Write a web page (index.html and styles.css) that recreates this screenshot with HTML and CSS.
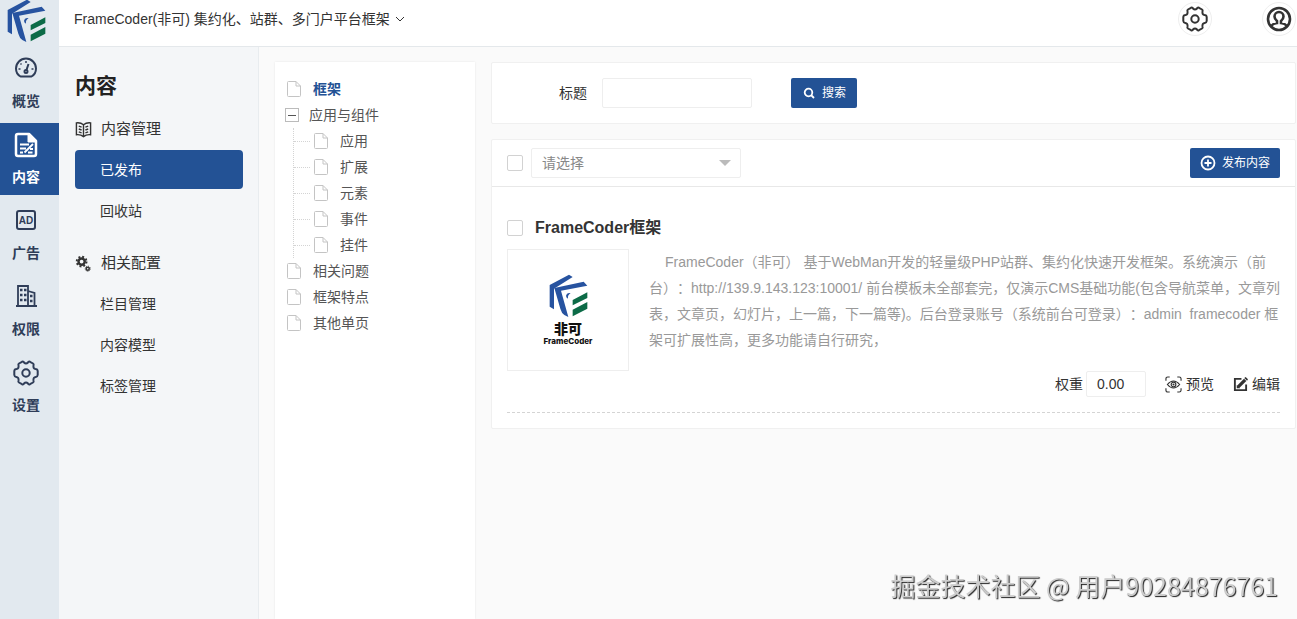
FILE: index.html
```html
<!DOCTYPE html>
<html lang="zh-CN">
<head>
    <meta charset="UTF-8">
    <meta name="viewport" content="width=device-width, initial-scale=1.0">
    <title>内容管理</title>
    <link rel="stylesheet" href="styles.css">
</head>
<body>
    <svg class="sprite" aria-hidden="true">
        <symbol id="logo" viewBox="146 192 117 132">
            <path fill="#2753a0" d="M148 225L206 194L217 201L161 236V298L148 290Z"/>
            <path fill="#2753a0" d="M162 234L250 215L261 227L182 242L204 321L192 315Q184 310 180 296Z"/>
            <path fill="#2753a0" d="M211 250Q199 247 197 257Q197 263 203 266Q201 255 211 250Z"/>
            <path fill="#0c6b47" d="M217 270L261 247V264L217 286ZM217 299L261 276V296L217 319Z"/>
        </symbol>
        <symbol id="gear" viewBox="0 0 26 26">
            <path fill="none" stroke="currentColor" stroke-width="2" stroke-linejoin="round" d="M9 1.8Q10.500 1.200 11 2.500Q13 4.600 15 2.500Q15.500 1.200 17 1.800L20 3.500Q21 4.200 20.500 5.500Q20 8.700 22.500 9Q24.500 9 24.700 11V15Q24.500 16.800 22.800 17Q20 17.300 20.500 20.500Q21 21.800 20 22.500L17 24.200Q15.500 24.800 15 23.500Q13 21.400 11 23.500Q10.500 24.800 9 24.200L6 22.500Q5 21.800 5.500 20.500Q6 17.300 3.200 17Q1.500 16.800 1.300 15V11Q1.500 9 3.500 9Q6 8.700 5.500 5.500Q5 4.200 6 3.500Z"/>
            <circle cx="13" cy="13" r="3.700" fill="none" stroke="currentColor" stroke-width="2"/>
        </symbol>
        <symbol id="file" viewBox="0 0 14 16">
            <path fill="#fff" stroke="#c4c4c4" d="M1.500 .5H9L13.500 5V14.500Q13.500 15.500 12.500 15.500H1.500Q.5 15.500 .5 14.500V1.500Q.5 .5 1.500 .5ZM9 .5V5H13.500"/>
        </symbol>
    </svg>

    <div class="layout">
        <nav class="rail">
            <a class="rail-logo" href="#" aria-label="FrameCoder"><svg class="logo"><use href="#logo"/></svg></a>
            <a class="rail-item" href="#">
                <svg viewBox="0 0 24 24" fill="none" stroke="currentColor" stroke-width="2">
                    <path d="M6.500 20.500Q2 18 2 12.500A10 10 0 0 1 22 12.500Q22 18 17.500 20.500Z" stroke-linejoin="round"/>
                    <path d="M12 5V7M6.500 7.500L7.500 8.500M4.500 13H6.500M17.500 13H19.500" stroke-width="1.500"/>
                    <path d="M14.500 8L12.500 14" /><circle cx="12" cy="15.500" r="1.500"/>
                </svg>
                <span>概览</span>
            </a>
            <a class="rail-item active" href="#">
                <svg class="big" viewBox="0 0 24 26" fill="none" stroke="currentColor" stroke-width="2.500">
                    <path d="M4 2H15L22 9V22Q22 24 20 24H4Q2 24 2 22V4Q2 2 4 2Z" stroke-linejoin="round"/>
                    <path d="M14 2V10H22Z" fill="currentColor" stroke-width="1"/>
                    <path d="M6 12.500H15M6 16.500H12M6 20.500H9M19 12L10.500 20.500M14 20.500H18.500M16 17H19" stroke-width="1.800"/>
                </svg>
                <span>内容</span>
            </a>
            <a class="rail-item" href="#">
                <svg viewBox="0 0 24 24">
                    <rect x="3" y="3" width="18" height="18" rx="2" fill="none" stroke="currentColor" stroke-width="2"/>
                    <text x="12" y="16" text-anchor="middle" class="ad-text">AD</text>
                </svg>
                <span>广告</span>
            </a>
            <a class="rail-item" href="#">
                <svg viewBox="0 0 24 24" fill="none" stroke="currentColor" stroke-width="1.800">
                    <path d="M2 22H23M4 22V2H14V22M14 7L20.500 9V22"/>
                    <path d="M6 6H8.500M10 6H12.500M6 11H8.500M10 11H12.500M6 16H8.500M10 16H12.500M16 12H18.500M16 17H18.500" stroke-width="2.500"/>
                </svg>
                <span>权限</span>
            </a>
            <a class="rail-item" href="#">
                <svg class="big"><use href="#gear"/></svg>
                <span>设置</span>
            </a>
        </nav>

        <div class="page">
            <header class="topbar">
                <button class="site-switch" type="button">FrameCoder(非可) 集约化、站群、多门户平台框架
                    <svg viewBox="0 0 10 6"><path d="M1 1L5 5L9 1" fill="none" stroke="currentColor"/></svg>
                </button>
                <div class="top-actions">
                    <button class="round" type="button" aria-label="设置"><svg><use href="#gear"/></svg></button>
                    <button class="round" type="button" aria-label="用户">
                        <svg viewBox="0 0 26 26" fill="none" stroke="currentColor" stroke-width="2.600">
                            <circle cx="13" cy="13" r="11"/>
                            <path d="M5 20Q7 17.500 11 17V15Q8.500 13 8.500 10.500A4.500 4.500 0 0 1 17.500 10.500Q17.500 13 15 15V17Q19 17.500 21 20"/>
                        </svg>
                    </button>
                </div>
            </header>

            <div class="body">
                <aside class="sidebar">
                    <h1>内容</h1>
                    <h2>
                        <svg viewBox="0 0 18 18" fill="none" stroke="currentColor" stroke-width="1.500">
                            <path d="M9 4Q6 1.500 1.500 2V14.500Q6 14 9 16.500Q12 14 16.500 14.500V2Q12 1.500 9 4V16.500"/>
                            <path d="M4 5.500L7 6.500M4 8.500L7 9.500M4 11.500L7 12.500M14 5.500L11 6.500M14 8.500L11 9.500M14 11.500L11 12.500"/>
                        </svg>
                        内容管理
                    </h2>
                    <ul>
                        <li><a class="active" href="#">已发布</a></li>
                        <li><a href="#">回收站</a></li>
                    </ul>
                    <h2>
                        <svg viewBox="0 0 18 18" fill="none" stroke="currentColor">
                            <circle cx="7" cy="7" r="3.300" stroke-width="2.600"/>
                            <circle cx="7" cy="7" r="5.200" stroke-width="2" stroke-dasharray="2.040 2.040"/>
                            <circle cx="13.500" cy="14.500" r="1.600" stroke-width="1.600"/>
                            <circle cx="13.500" cy="14.500" r="2.700" stroke-width="1" stroke-dasharray="1.060 1.060"/>
                        </svg>
                        相关配置
                    </h2>
                    <ul>
                        <li><a href="#">栏目管理</a></li>
                        <li><a href="#">内容模型</a></li>
                        <li><a href="#">标签管理</a></li>
                    </ul>
                </aside>

                <main class="content">
                    <section class="tree">
                        <ul>
                            <li><a class="current" href="#"><svg><use href="#file"/></svg>框架</a></li>
                            <li>
                                <div class="branch"><button class="toggle" type="button" aria-label="收起"></button><a href="#">应用与组件</a></div>
                                <ul class="children">
                                    <li><a href="#"><svg><use href="#file"/></svg>应用</a></li>
                                    <li><a href="#"><svg><use href="#file"/></svg>扩展</a></li>
                                    <li><a href="#"><svg><use href="#file"/></svg>元素</a></li>
                                    <li><a href="#"><svg><use href="#file"/></svg>事件</a></li>
                                    <li><a href="#"><svg><use href="#file"/></svg>挂件</a></li>
                                </ul>
                            </li>
                            <li><a href="#"><svg><use href="#file"/></svg>相关问题</a></li>
                            <li><a href="#"><svg><use href="#file"/></svg>框架特点</a></li>
                            <li><a href="#"><svg><use href="#file"/></svg>其他单页</a></li>
                        </ul>
                    </section>

                    <div class="main-col">
                        <form class="card search">
                            <label for="title">标题</label>
                            <input type="text" id="title">
                            <button class="btn" type="button">
                                <svg viewBox="0 0 12 12" fill="none" stroke="currentColor" stroke-width="1.800"><circle cx="5.500" cy="5.500" r="3.800"/><path d="M8 8L11 11"/></svg>
                                搜索
                            </button>
                        </form>

                        <section class="card">
                            <div class="toolbar">
                                <input type="checkbox" aria-label="全选">
                                <div class="select">
                                    <select aria-label="批量操作"><option>请选择</option></select>
                                </div>
                                <button class="btn publish" type="button">
                                    <svg viewBox="0 0 16 16" fill="none" stroke="currentColor" stroke-width="1.800"><circle cx="8" cy="8" r="6.500"/><path d="M8 4.500V11.500M4.500 8H11.500"/></svg>
                                    发布内容
                                </button>
                            </div>

                            <article class="article">
                                <div class="article-title">
                                    <input type="checkbox" id="item1">
                                    <label for="item1">FrameCoder框架</label>
                                </div>
                                <div class="article-body">
                                    <div class="thumb">
                                        <svg class="logo"><use href="#logo"/></svg>
                                        <strong>非可</strong>
                                        <span>FrameCoder</span>
                                    </div>
                                    <div class="info">
                                        <p>FrameCoder（非可） 基于WebMan开发的轻量级PHP站群、集约化快速开发框架。系统演示（前台）：http://139.9.143.123:10001/ 前台模板未全部套完，仅演示CMS基础功能(包含导航菜单，文章列表，文章页，幻灯片，上一篇，下一篇等)。后台登录账号（系统前台可登录）：admin&nbsp; framecoder 框架可扩展性高，更多功能请自行研究，</p>
                                    </div>
                                </div>
                                <div class="actions">
                                    <label for="weight">权重</label>
                                    <input type="text" id="weight" value="0.00">
                                    <a href="#">
                                        <svg viewBox="0 0 18 18" fill="none" stroke="currentColor" stroke-width="1.200">
                                            <path d="M1 5V3Q1 1 3 1H5M13 1H15Q17 1 17 3V5M17 13V15Q17 17 15 17H13M5 17H3Q1 17 1 15V13"/>
                                            <path d="M2.500 9Q9 1.500 15.500 9Q9 16.500 2.500 9Z"/><circle cx="9" cy="9" r="2.500"/><circle cx="9" cy="9" r=".5"/>
                                        </svg>预览</a>
                                    <a class="edit" href="#">
                                        <svg viewBox="0 0 16 16" fill="none" stroke="currentColor" stroke-width="2">
                                            <path d="M9 2H2V14H14V8"/><path d="M5.500 10.500L13 3" stroke-width="3.500"/><path fill="currentColor" stroke="none" d="M4 12V8.500L7.500 12ZM12 1L13.500 0L16 2.500L15 4Z"/>
                                        </svg>编辑</a>
                                </div>
                            </article>
                        </section>
                    </div>
                </main>
            </div>
        </div>
    </div>
    <div class="watermark">掘金技术社区 @ 用户90284876761</div>
</body>
</html>
```
FILE: styles.css
```css
* {
    box-sizing: border-box;
}

body {
    margin: 0;
    font: 14px/24px "Liberation Sans", "Noto Sans CJK SC", sans-serif;
    color: #333;
    background-color: #fafafa;
}

ul, h1, h2, p {
    margin: 0;
    padding: 0;
    list-style: none;
}

a {
    color: inherit;
    text-decoration: none;
}

button, input, select {
    font: inherit;
    color: inherit;
}

button {
    padding: 0;
    border: none;
    background: none;
    cursor: pointer;
}

svg {
    flex: none;
}

.sprite {
    position: absolute;
    width: 0;
    height: 0;
}

.logo {
    display: block;
    width: 39px;
    height: 44px;
}

.layout {
    display: flex;
    min-height: 100vh;
}

/* left icon rail */
.rail {
    flex: none;
    display: flex;
    flex-direction: column;
    gap: 4px;
    width: 59px;
    background-color: #e2e9ef;
    color: #2f3d58;
}

.rail-logo {
    display: flex;
    align-items: flex-end;
    height: 43px;
    padding-left: 7px;
    overflow: hidden;
}

.rail-item {
    display: flex;
    flex-direction: column;
    align-items: center;
    justify-content: space-between;
    height: 72px;
    padding: 9px 7px 6px 0;
    font-weight: bold;
}

.rail-item svg {
    width: 24px;
    height: 24px;
}

.rail-item svg.big {
    width: 26px;
    height: 26px;
}

.rail-item.active {
    background-color: #235295;
    color: #fff;
}

.ad-text {
    font: bold 10px "Liberation Sans", sans-serif;
    fill: currentColor;
}

.page {
    flex: 1;
    min-width: 0;
    display: flex;
    flex-direction: column;
}

.topbar {
    display: flex;
    justify-content: space-between;
    align-items: flex-start;
    height: 47px;
    padding: 2px 1px 0 15px;
    border-bottom: 1px solid #e4e8eb;
    background-color: #fff;
}

.site-switch {
    display: flex;
    align-items: center;
    gap: 5px;
    height: 34px;
}

.site-switch svg {
    width: 10px;
    height: 6px;
}

.top-actions {
    display: flex;
    gap: 50px;
}

.round {
    display: flex;
    align-items: center;
    justify-content: center;
    width: 34px;
    height: 34px;
    border: 1px solid #eee;
    border-radius: 50%;
}

.round svg {
    width: 26px;
    height: 26px;
}

.body {
    flex: 1;
    display: flex;
}

/* second level menu */
.sidebar {
    flex: none;
    width: 200px;
    padding: 24px 15px 0 16px;
    border-right: 1px solid #e8ecef;
    background-color: #f4f6f8;
}

.sidebar h1 {
    font-size: 21px;
    line-height: 30px;
    color: #222;
}

.sidebar h2 {
    display: flex;
    align-items: center;
    gap: 9px;
    height: 24px;
    margin: 16px 0 9px;
    font-size: 15px;
    font-weight: normal;
}

.sidebar h2 svg {
    width: 17px;
    height: 17px;
}

.sidebar ul {
    display: flex;
    flex-direction: column;
    gap: 2px;
}

.sidebar ul + h2 {
    margin-top: 21px;
}

.sidebar li a {
    display: block;
    height: 39px;
    padding-left: 25px;
    border-radius: 4px;
    line-height: 41px;
}

.sidebar li a.active {
    background-color: #235295;
    color: #fff;
}

.content {
    flex: 1;
    min-width: 0;
    display: flex;
    gap: 16px;
    padding: 15px 1px 0 16px;
}

/* category tree */
.tree {
    flex: none;
    width: 200px;
    padding: 14px 10px;
    background-color: #fff;
    box-shadow: 0 0 2px #e6e6e6;
    color: #555;
}

.tree a {
    display: flex;
    align-items: center;
    gap: 12px;
    height: 26px;
    padding-left: 2px;
}

.tree svg {
    width: 14px;
    height: 16px;
}

.tree .current {
    color: #235295;
    font-weight: bold;
}

.branch {
    display: flex;
    align-items: center;
    gap: 8px;
}

.toggle {
    display: flex;
    align-items: center;
    justify-content: center;
    width: 14px;
    height: 14px;
    border: 1px solid #bbb;
}

.toggle::before {
    content: "";
    width: 8px;
    height: 1px;
    background-color: #555;
}

.children {
    margin-left: 8px;
    border-left: 1px dotted #d4d4d4;
}

.children a {
    padding-left: 0;
}

.children a::before {
    content: "";
    width: 16px;
    border-top: 1px dotted #d4d4d4;
    margin-right: -8px;
}

.main-col {
    flex: 1;
    min-width: 0;
    display: flex;
    flex-direction: column;
    gap: 15px;
}

.card {
    background-color: #fff;
    border: 1px solid #f0f0f0;
    border-radius: 2px;
}

.search {
    display: flex;
    align-items: center;
    padding: 15px 15px 15px 67px;
}

.search input {
    width: 150px;
    height: 30px;
    margin: 0 39px 0 15px;
    padding: 0 10px;
    border: 1px solid #eee;
    border-radius: 2px;
}

.btn {
    display: flex;
    align-items: center;
    gap: 7px;
    height: 30px;
    padding: 0 11px 0 12px;
    border-radius: 2px;
    background-color: #235295;
    color: #fff;
    font-size: 12px;
}

.btn svg {
    width: 12px;
    height: 12px;
}

.toolbar {
    display: flex;
    align-items: center;
    gap: 8px;
    padding: 8px 15px;
    border-bottom: 1px solid #e8e8e8;
}

input[type="checkbox"] {
    appearance: none;
    width: 16px;
    height: 16px;
    margin: 0;
    border: 1px solid #d2d2d2;
    border-radius: 2px;
    background-color: #fff;
}

.select {
    position: relative;
    width: 210px;
}

.select select {
    appearance: none;
    display: block;
    width: 100%;
    height: 30px;
    padding: 0 10px;
    border: 1px solid #eee;
    border-radius: 2px;
    background-color: #fff;
    color: #888;
}

.select::after {
    content: "";
    position: absolute;
    top: 12px;
    right: 10px;
    border: 6px solid transparent;
    border-top-color: #bbb;
    pointer-events: none;
}

.publish {
    margin-left: auto;
    gap: 6px;
    padding: 0 10px;
}

.publish svg {
    width: 16px;
    height: 16px;
}

.article {
    margin: 29px 15px 15px;
    border-bottom: 1px dashed #d4d4d4;
}

.article-title {
    display: flex;
    align-items: center;
    gap: 12px;
    height: 24px;
    margin-bottom: 9px;
    font-size: 16px;
    font-weight: bold;
}

.article-body {
    display: flex;
    gap: 20px;
}

.thumb {
    flex: none;
    display: flex;
    flex-direction: column;
    align-items: center;
    width: 122px;
    height: 122px;
    padding-top: 24px;
    border: 1px solid #eee;
    color: #111;
}

.thumb strong {
    margin-top: 2px;
    font: 900 14px/16px "Noto Sans CJK SC", sans-serif;
}

.thumb span {
    font: 800 8px/10px Inter, sans-serif;
}

.info {
    flex: 1;
    line-height: 26px;
    color: #999;
}

.info p {
    text-indent: 16px;
    text-spacing-trim: space-all;
}

.actions {
    display: flex;
    align-items: center;
    justify-content: flex-end;
    padding-bottom: 15px;
}

.actions input {
    width: 60px;
    height: 26px;
    margin: 0 19px 0 3px;
    padding: 0 10px;
    border: 1px solid #eee;
    border-radius: 2px;
}

.actions a {
    display: flex;
    align-items: center;
    gap: 4px;
}

.actions svg {
    width: 17px;
    height: 17px;
}

.actions .edit {
    margin-left: 19px;
}

.actions .edit svg {
    width: 15px;
    height: 15px;
}

.watermark {
    position: fixed;
    right: 19px;
    bottom: 16px;
    font: 25px/36px "Noto Sans CJK SC", sans-serif;
    color: #ccc;
    text-shadow: 1px 1px 1px #222;
    pointer-events: none;
}
```
